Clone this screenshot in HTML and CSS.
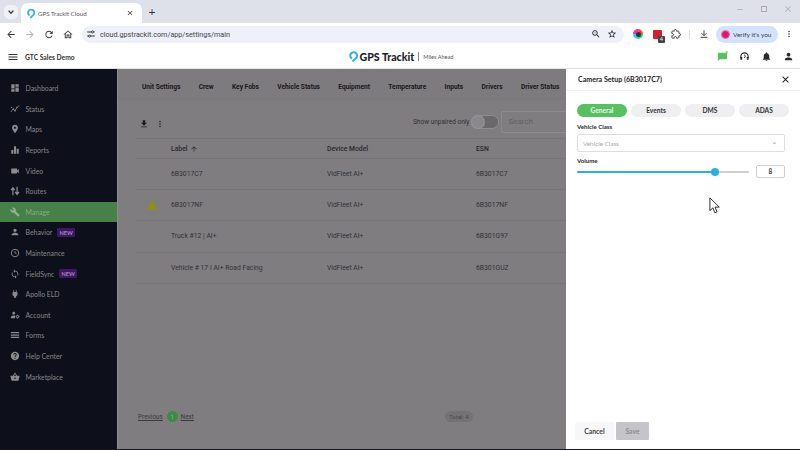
FILE: index.html
```html
<!DOCTYPE html>
<html lang="en">
<head>
<meta charset="utf-8">
<title>GPS Trackit Cloud</title>
<link rel="stylesheet" href="styles.css">
</head>
<body>
<svg class="defs" width="0" height="0" aria-hidden="true">
  <symbol id="i-dash" viewBox="0 0 24 24"><path d="M3 13h8V3H3v10zm0 8h8v-6H3v6zm10 0h8V11h-8v10zm0-18v6h8V3h-8z"/></symbol>
  <symbol id="i-status" viewBox="0 0 24 24"><path d="M2 19l6-7 4 4 5-8" fill="none" stroke="currentColor" stroke-width="2"/><circle cx="8" cy="12" r="2"/><circle cx="12" cy="16" r="2"/><circle cx="17" cy="8" r="2"/><circle cx="21" cy="5" r="1.6"/><circle cx="4" cy="8" r="1.6"/></symbol>
  <symbol id="i-place" viewBox="0 0 24 24"><path d="M12 2C8.130 2 5 5.130 5 9c0 5.250 7 13 7 13s7-7.750 7-13c0-3.870-3.130-7-7-7zm0 9.500c-1.380 0-2.500-1.120-2.500-2.500s1.120-2.500 2.500-2.500 2.500 1.120 2.500 2.500-1.120 2.500-2.500 2.500z"/></symbol>
  <symbol id="i-bars" viewBox="0 0 24 24"><path d="M3 12h5v9H3zM9.500 3h5v18h-5zM16 9h5v12h-5z"/></symbol>
  <symbol id="i-video" viewBox="0 0 24 24"><path d="M17 10.500V7c0-.55-.45-1-1-1H4c-.55 0-1 .45-1 1v10c0 .55.45 1 1 1h12c.55 0 1-.45 1-1v-3.500l4 4v-11l-4 4z"/></symbol>
  <symbol id="i-routes" viewBox="0 0 24 24"><path d="M7 22V6M2.500 10L7 4l4.500 6M17 2v16M12.500 14l4.500 6 4.500-6" fill="none" stroke="currentColor" stroke-width="3"/></symbol>
  <symbol id="i-wrench" viewBox="0 0 24 24"><path d="M22.700 19l-9.100-9.100c.9-2.300.4-5-1.500-6.900-2-2-5-2.400-7.400-1.300L9 6 6 9 1.600 4.700C.4 7.100.9 10.100 2.900 12.100c1.900 1.900 4.600 2.400 6.900 1.500l9.100 9.100c.4.4 1 .4 1.400 0l2.300-2.300c.5-.4.5-1.100.1-1.400z"/></symbol>
  <symbol id="i-person" viewBox="0 0 24 24"><path d="M12 12c2.210 0 4-1.790 4-4s-1.790-4-4-4-4 1.790-4 4 1.790 4 4 4zm0 2c-2.670 0-8 1.340-8 4v2h16v-2c0-2.660-5.330-4-8-4z"/></symbol>
  <symbol id="i-maint" viewBox="0 0 24 24"><circle cx="12" cy="12" r="9" fill="none" stroke="currentColor" stroke-width="2.200"/><path d="M12 7v5l4 2" fill="none" stroke="currentColor" stroke-width="2"/></symbol>
  <symbol id="i-sync" viewBox="0 0 24 24"><path d="M12 4V1L8 5l4 4V6c3.310 0 6 2.690 6 6 0 1.010-.25 1.970-.7 2.800l1.460 1.460C19.540 15.030 20 13.570 20 12c0-4.420-3.580-8-8-8zm0 14c-3.310 0-6-2.690-6-6 0-1.010.25-1.970.7-2.800L5.240 7.740C4.460 8.970 4 10.430 4 12c0 4.420 3.580 8 8 8v3l4-4-4-4v3z"/></symbol>
  <symbol id="i-plug" viewBox="0 0 24 24"><path d="M16 7V3h-2v4h-4V3H8v4h-.01C7 6.990 6 7.990 6 8.990v5.490L9.500 18v3h5v-3l3.500-3.510v-5.500c0-1-1-2-2-1.990z"/></symbol>
  <symbol id="i-account" viewBox="0 0 24 24"><path d="M9 11c2 0 3.500-1.600 3.500-3.500S11 4 9 4 5.500 5.600 5.500 7.500 7 11 9 11zm0 2c-2.700 0-7 1.300-7 4v3h10v-7z"/><circle cx="18" cy="16" r="3" fill="none" stroke="currentColor" stroke-width="2.400"/><path d="M18 11.200v1.800M18 19v1.800M13.200 16H15M21 16h1.800" stroke="currentColor" stroke-width="1.600"/></symbol>
  <symbol id="i-menu" viewBox="0 0 24 24"><path d="M3 18h18v-2H3v2zm0-5h18v-2H3v2zm0-7v2h18V6H3z"/></symbol>
  <symbol id="i-forms" viewBox="0 0 24 24"><path d="M2 5h20v3H2zM2 10.500h20v3H2zM2 16h20v3H2z"/></symbol>
  <symbol id="i-help" viewBox="0 0 24 24"><path d="M12 2C6.480 2 2 6.480 2 12s4.480 10 10 10 10-4.480 10-10S17.520 2 12 2zm1 17h-2v-2h2v2zm2.070-7.750l-.9.92C13.450 12.900 13 13.500 13 15h-2v-.5c0-1.100.45-2.100 1.170-2.830l1.240-1.260c.37-.36.59-.86.59-1.410 0-1.100-.9-2-2-2s-2 .9-2 2H8c0-2.210 1.790-4 4-4s4 1.790 4 4c0 .88-.36 1.680-.93 2.250z"/></symbol>
  <symbol id="i-basket" viewBox="0 0 24 24"><path d="M17.210 9l-4.380-6.560c-.19-.28-.51-.42-.83-.42-.32 0-.64.14-.83.43L6.790 9H2c-.55 0-1 .45-1 1 0 .09.01.18.04.27l2.540 9.270c.23.84 1 1.460 1.920 1.460h13c.92 0 1.690-.62 1.930-1.460l2.540-9.270L23 10c0-.55-.45-1-1-1h-4.790zM9 9l3-4.400L15 9H9zm3 8c-1.100 0-2-.9-2-2s.9-2 2-2 2 .9 2 2-.9 2-2 2z"/></symbol>
  <symbol id="i-bell" viewBox="0 0 24 24"><path d="M12 22c1.100 0 2-.9 2-2h-4c0 1.100.89 2 2 2zm6-6v-5c0-3.070-1.640-5.640-4.500-6.320V4c0-.83-.67-1.500-1.500-1.500s-1.500.67-1.500 1.500v.68C7.630 5.360 6 7.920 6 11v5l-2 2v1h16v-1l-2-2z"/></symbol>
  <symbol id="i-download" viewBox="0 0 24 24"><path d="M19 9h-4V3H9v6H5l7 7 7-7zM5 18v2h14v-2H5z"/></symbol>
  <symbol id="i-more" viewBox="0 0 24 24"><path d="M12 8c1.100 0 2-.9 2-2s-.9-2-2-2-2 .9-2 2 .9 2 2 2zm0 2c-1.100 0-2 .9-2 2s.9 2 2 2 2-.9 2-2-.9-2-2-2zm0 6c-1.100 0-2 .9-2 2s.9 2 2 2 2-.9 2-2-.9-2-2-2z"/></symbol>
  <symbol id="i-close" viewBox="0 0 24 24"><path d="M19 6.410L17.590 5 12 10.590 6.410 5 5 6.410 10.590 12 5 17.590 6.410 19 12 13.410 17.590 19 19 17.590 13.410 12z"/></symbol>
  <symbol id="i-drop" viewBox="0 0 24 24"><path d="M8.500 16.500A7.500 7.500 0 1 1 17 16L10 23" fill="none" stroke="currentColor" stroke-width="4.500"/></symbol>
</svg>

<header class="tabstrip">
  <span class="tab-menu"><svg class="ico-8" viewBox="0 0 24 24"><path d="M5 8l7 8 7-8" fill="none" stroke="currentColor" stroke-width="4"/></svg></span>
  <div class="tab">
    <svg class="ico-9 cyan"><use href="#i-drop"/></svg>
    <span class="tab-title">GPS Trackit Cloud</span>
    <svg class="ico-8 tab-x"><use href="#i-close"/></svg>
  </div>
  <span class="tab-plus">+</span>
  <div class="win">
    <span class="win-min"></span>
    <span class="win-max"></span>
    <svg class="ico-10 win-x"><use href="#i-close"/></svg>
  </div>
</header>

<nav class="chrome">
  <svg class="cbtn" viewBox="0 0 24 24"><path d="M20 11H7.830l5.590-5.590L12 4l-8 8 8 8 1.410-1.410L7.830 13H20v-2z"/></svg>
  <svg class="cbtn dim" viewBox="0 0 24 24"><path d="M12 4l-1.410 1.410L16.170 11H4v2h12.170l-5.580 5.590L12 20l8-8z"/></svg>
  <svg class="cbtn" viewBox="0 0 24 24"><path d="M17.650 6.350C16.200 4.900 14.210 4 12 4c-4.420 0-7.990 3.580-7.990 8s3.570 8 7.990 8c3.730 0 6.840-2.550 7.730-6h-2.080c-.82 2.330-3.040 4-5.650 4-3.310 0-6-2.690-6-6s2.690-6 6-6c1.660 0 3.140.69 4.220 1.780L13 11h7V4l-2.350 2.350z"/></svg>
  <svg class="cbtn" viewBox="0 0 24 24"><path d="M12 5.690l5 4.500V18h-2v-6H9v6H7v-7.810l5-4.500M12 3L2 12h3v8h6v-6h2v6h6v-8h3L12 3z"/></svg>
  <div class="omni">
    <svg class="ico-10" viewBox="0 0 24 24"><path d="M3 7h10M18 7h3M3 17h3M11 17h10" fill="none" stroke="#333" stroke-width="2.500"/><circle cx="15.500" cy="7" r="2.500" fill="none" stroke="#333" stroke-width="2.200"/><circle cx="8.500" cy="17" r="2.500" fill="none" stroke="#333" stroke-width="2.200"/></svg>
    <span class="url">cloud.gpstrackit.com/app/settings/main</span>
    <svg class="ico-10 omni-zoom" viewBox="0 0 24 24"><path d="M15.500 14h-.79l-.28-.27C15.410 12.590 16 11.110 16 9.500 16 5.910 13.090 3 9.500 3S3 5.910 3 9.500 5.910 16 9.500 16c1.610 0 3.090-.59 4.230-1.570l.27.28v.79l5 4.990L20.490 19l-4.990-5zm-6 0C7.010 14 5 11.990 5 9.500S7.010 5 9.500 5 14 7.010 14 9.500 11.990 14 9.500 14z"/><path d="M7 9h5v1H7z"/></svg>
    <svg class="ico-10" viewBox="0 0 24 24"><path d="M22 9.240l-7.190-.62L12 2 9.190 8.630 2 9.240l5.460 4.730L5.820 21 12 17.270 18.180 21l-1.630-7.030L22 9.240zM12 15.400l-3.760 2.270 1-4.280-3.320-2.880 4.380-.38L12 6.100l1.710 4.040 4.380.38-3.320 2.880 1 4.280L12 15.400z"/></svg>
  </div>
  <span class="ext-ring"><span class="ext-ring-in"></span></span>
  <span class="ext-red"><span class="ext-badge">4</span></span>
  <svg class="ico-10 ext-puzzle" viewBox="0 0 24 24"><path d="M20.500 11H19V7c0-1.100-.9-2-2-2h-4V3.500C13 2.120 11.880 1 10.500 1S8 2.120 8 3.500V5H4c-1.100 0-1.990.9-1.990 2v3.800H3.500c1.490 0 2.700 1.210 2.700 2.700s-1.210 2.700-2.700 2.700H2V20c0 1.100.9 2 2 2h3.800v-1.500c0-1.490 1.210-2.700 2.700-2.700 1.490 0 2.700 1.210 2.700 2.700V22H17c1.100 0 2-.9 2-2v-4h1.500c1.380 0 2.500-1.120 2.500-2.500S21.880 11 20.500 11z" fill="none" stroke="#333" stroke-width="2.200"/></svg>
  <span class="sep"></span>
  <svg class="ico-10 dl" viewBox="0 0 24 24"><path d="M12 3v12M6 10l6 6 6-6M4 20h16" fill="none" stroke="#333" stroke-width="2.200"/></svg>
  <div class="verify"><span class="avatar"></span><span>Verify it's you</span></div>
  <svg class="ico-10 kebab"><use href="#i-more"/></svg>
</nav>

<div class="apphead">
  <div class="apphead-left">
    <svg class="ico-12"><use href="#i-menu"/></svg>
    <span class="org">GTC Sales Demo</span>
  </div>
  <div class="logo">
    <svg class="logo-mark"><use href="#i-drop"/></svg>
    <span class="logo-name">GPS Trackit</span>
    <span class="logo-tag">Miles Ahead</span>
  </div>
  <div class="apphead-right">
    <svg class="ico-11 green" viewBox="0 0 24 24"><path d="M20 4H4c-1.100 0-2 .9-2 2v16l4-4h14c1.100 0 2-.9 2-2V6c0-1.100-.9-2-2-2z"/><path d="M18 1h5v5z"/></svg>
    <svg class="ico-11" viewBox="0 0 24 24"><path d="M4 15v-3a8 8 0 0 1 16 0v3" fill="none" stroke="#2a2a2a" stroke-width="2.400"/><path d="M3 13h4v6H3zM17 13h4v6h-4z"/><path d="M12 8l2 5-3 2" fill="none" stroke="#2a2a2a" stroke-width="2"/></svg>
    <svg class="ico-11"><use href="#i-bell"/></svg>
    <svg class="ico-11"><use href="#i-person"/></svg>
  </div>
</div>

<div class="app">
  <aside class="side">
    <a class="item"><svg class="s-ico"><use href="#i-dash"/></svg>Dashboard</a>
    <a class="item"><svg class="s-ico"><use href="#i-status"/></svg>Status</a>
    <a class="item"><svg class="s-ico"><use href="#i-place"/></svg>Maps</a>
    <a class="item"><svg class="s-ico"><use href="#i-bars"/></svg>Reports</a>
    <a class="item"><svg class="s-ico"><use href="#i-video"/></svg>Video</a>
    <a class="item"><svg class="s-ico"><use href="#i-routes"/></svg>Routes</a>
    <a class="item active"><svg class="s-ico"><use href="#i-wrench"/></svg>Manage</a>
    <a class="item"><svg class="s-ico"><use href="#i-person"/></svg>Behavior<span class="new">NEW</span></a>
    <a class="item"><svg class="s-ico"><use href="#i-maint"/></svg>Maintenance</a>
    <a class="item"><svg class="s-ico"><use href="#i-sync"/></svg>FieldSync<span class="new">NEW</span></a>
    <a class="item"><svg class="s-ico"><use href="#i-plug"/></svg>Apollo ELD</a>
    <a class="item"><svg class="s-ico"><use href="#i-account"/></svg>Account</a>
    <a class="item"><svg class="s-ico"><use href="#i-forms"/></svg>Forms</a>
    <a class="item"><svg class="s-ico"><use href="#i-help"/></svg>Help Center</a>
    <a class="item"><svg class="s-ico"><use href="#i-basket"/></svg>Marketplace</a>
  </aside>

  <main class="main">
    <div class="tabs">
      <span>Unit Settings</span><span>Crew</span><span>Key Fobs</span><span>Vehicle Status</span><span>Equipment</span><span>Temperature</span><span>Inputs</span><span>Drivers</span><span>Driver Status</span>
    </div>
    <div class="content">
      <div class="tools">
        <svg class="ico-10 tools-ico"><use href="#i-download"/></svg>
        <svg class="ico-10 tools-ico tools-more"><use href="#i-more"/></svg>
        <span class="unpaired">Show unpaired only</span>
        <span class="toggle"><span class="knob"></span></span>
        <span class="search">Search</span>
      </div>
      <div class="row head">
        <span></span>
        <span class="sort">Label <svg class="ico-8" viewBox="0 0 24 24"><path d="M4 12l1.410 1.410L11 7.830V20h2V7.830l5.580 5.590L20 12l-8-8-8 8z"/></svg></span>
        <span>Device Model</span><span>ESN</span>
      </div>
      <div class="row"><span></span><span>6B3017C7</span><span>VidFleet AI+</span><span>6B3017C7</span></div>
      <div class="row"><span class="warn"><svg class="ico-12 olive" viewBox="0 0 24 24"><path d="M1 21h22L12 2 1 21z"/></svg></span><span>6B3017NF</span><span>VidFleet AI+</span><span>6B3017NF</span></div>
      <div class="row"><span></span><span>Truck #12 | AI+</span><span>VidFleet AI+</span><span>6B301G97</span></div>
      <div class="row"><span></span><span>Vehicle # 17 I AI+ Road Facing</span><span>VidFleet AI+</span><span>6B301GUZ</span></div>
    </div>
    <div class="pager">
      <a>Previous</a><span class="page">1</span><a>Next</a>
      <span class="total">Total: 4</span>
    </div>
  </main>

  <section class="panel">
    <div class="p-head">
      <span class="p-title">Camera Setup (6B3017C7)</span>
      <svg class="ico-11"><use href="#i-close"/></svg>
    </div>
    <div class="p-body">
      <div class="pills">
        <span class="pill on">General</span><span class="pill">Events</span><span class="pill">DMS</span><span class="pill">ADAS</span>
      </div>
      <label class="field-label">Vehicle Class</label>
      <div class="select">Vehicle Class<svg class="caret" viewBox="0 0 10 6"><path d="M1 1h8L5 5z"/></svg></div>
      <label class="field-label vol">Volume</label>
      <div class="volume">
        <div class="track"><div class="fill"></div><div class="thumb"></div></div>
        <div class="num">8</div>
      </div>
      <div class="pointer">
        <svg class="cursor" viewBox="0 0 14 20"><path d="M1 1v15l3.500-3.200 2.300 5.700 2.600-1.100-2.400-5.500H12z" fill="#fff" stroke="#222" stroke-width="1.100"/></svg>
      </div>
    </div>
    <div class="p-foot">
      <span class="btn-cancel">Cancel</span>
      <span class="btn-save">Save</span>
    </div>
  </section>
</div>
<div class="strip"></div>
</body>
</html>
```

FILE: styles.css
```css
* { box-sizing: border-box; }
html, body { margin: 0; padding: 0; width: 800px; height: 450px; overflow: hidden; }
body { font-family: "Lato", "Noto Sans", sans-serif; color: #222; background: #fff; display: flex; flex-direction: column; }
.defs { position: absolute; }
svg { flex: none; display: block; fill: currentColor; }
.ico-8 { width: 8px; height: 8px; }
.ico-9 { width: 10px; height: 11px; }
.ico-10 { width: 10px; height: 10px; }
.ico-11 { width: 11px; height: 11px; }
.ico-12 { width: 12px; height: 12px; }

.tabstrip { height: 23px; background: #dfe1ea; display: flex; align-items: flex-end; flex: none; padding-left: 4px; position: relative; }
.tab-menu { width: 14px; height: 14px; margin: 0 3px 4px 0; background: #f0f1f6; border-radius: 5px; display: flex; align-items: center; justify-content: center; color: #333; }
.tab { width: 121px; height: 20px; background: #fff; border-radius: 7px 7px 0 0; display: flex; align-items: center; padding: 0 8px 0 5px; font-size: 6.200px; color: #555; }
.tab-title { margin-left: 2px; white-space: nowrap; }
.tab-x { margin-left: auto; color: #333; }
.cyan { color: #36b4e0; }
.tab-plus { margin: 0 0 4px 3px; width: 14px; font-size: 12px; line-height: 14px; color: #333; text-align: center; }
.win { margin-left: auto; display: flex; align-items: center; gap: 16px; padding: 0 7px 8px 0; height: 20px; color: #999; }
.win-min { width: 6px; height: 1px; background: #bbb; margin-right: 2px; }
.win-max { width: 6px; height: 6px; border: 1px solid #aaa; }
.win-x { color: #b0b0b0; }

.chrome { height: 22px; background: #fff; flex: none; display: flex; align-items: center; padding-left: 4px; }
.cbtn { width: 14px; height: 11px; margin-right: 5px; fill: #3c3c3c; }
.cbtn.dim { fill: #b6b6b6; }
.omni { width: 542px; height: 17px; margin-left: 2px; background: #eef0fa; border-radius: 9px; display: flex; align-items: center; padding: 0 7px 0 4px; gap: 4px; }
.url { font-family: "Roboto", sans-serif; font-size: 7.200px; color: #444; white-space: nowrap; }
.omni-zoom { margin-left: auto; margin-right: 2px; }
.ext-ring { width: 10px; height: 10px; margin-left: 9px; border-radius: 50%; background: conic-gradient(#e53 0 25%, #3c6 0 50%, #3cf 0 75%, #e3a 0); display: flex; align-items: center; justify-content: center; }
.ext-ring-in { width: 5px; height: 5px; border-radius: 50%; background: #333; }
.ext-red { width: 9px; height: 9px; margin-left: 10px; background: #d4202d; border-radius: 1px; position: relative; }
.ext-badge { position: absolute; right: -3px; bottom: -4px; width: 7px; height: 7px; border-radius: 1px; background: #444; color: #fff; font-size: 5px; line-height: 7px; text-align: center; }
.ext-puzzle { margin-left: 9px; }
.sep { width: 1px; height: 9px; background: #ddd; margin-left: 8px; }
.dl { margin-left: 9px; }
.verify { width: 62px; height: 17px; margin-left: 7px; border-radius: 9px; background: #d3e3fd; display: flex; align-items: center; gap: 3px; padding-left: 5px; font-size: 6.500px; color: #444; white-space: nowrap; }
.avatar { width: 9px; height: 9px; border-radius: 50%; background: #d81b72; border: 1px solid #e7a; flex: none; }
.kebab { margin-left: 6px; color: #333; }

.apphead { height: 24px; flex: none; background: #fff; border-bottom: 1px solid #e2e2e2; display: flex; align-items: center; justify-content: space-between; padding: 0 6px 0 7px; }
.apphead-left { width: 200px; display: flex; align-items: center; gap: 6px; color: #333; }
.org { font-size: 6.700px; font-weight: 700; color: #333; white-space: nowrap; }
.logo { display: flex; align-items: center; }
.logo-mark { width: 11px; height: 13px; color: #36b4e0; margin-right: 1px; }
.logo-name { font-size: 10.600px; font-weight: 900; color: #1d1d2b; white-space: nowrap; }
.logo-tag { font-size: 5.600px; color: #555; margin-left: 4px; padding-left: 4px; border-left: 1px solid #888; line-height: 9px; white-space: nowrap; }
.apphead-right { width: 200px; display: flex; justify-content: flex-end; gap: 11px; color: #2a2a2a; }
.green { color: #5cc05d; }

.app { flex: 1; display: flex; min-height: 0; }
.side { width: 117px; flex: none; background: #0d0f1b; padding-top: 9px; display: flex; flex-direction: column; }
.item { height: 20.600px; flex: none; display: flex; align-items: center; padding-left: 10px; font-size: 6.900px; color: #868688; white-space: nowrap; }
.item.active { background: #48804a; color: #8aa889; }
.s-ico { width: 10px; height: 10px; margin-right: 5.500px; color: #8b8b8d; }
.active .s-ico { color: #94b093; }
.new { margin-left: 5px; padding: 0 2px; height: 9px; line-height: 9px; font-size: 5.600px; font-weight: 700; color: #9c8aa8; background: #3d1766; border-radius: 1px; }

.main { width: 449px; flex: none; background: #7f7d80; overflow: hidden; display: flex; flex-direction: column; border-left: 1px solid #8a908a; }
.tabs { height: 31px; flex: none; display: flex; align-items: center; gap: 18.300px; padding: 5px 0 0 24px; font-family: "Roboto", sans-serif; font-size: 6.600px; font-weight: 700; color: #19181a; background: #7d7b7e; white-space: nowrap; border-bottom: 1px solid #7b797c; }
.content { width: 460px; flex: none; margin-left: 17px; }
.tools { height: 38px; display: flex; align-items: center; padding: 5px 0 0 4px; color: #1f1e20; }
.tools-ico { margin-top: 5px; }
.tools-more { margin-left: 6px; }
.unpaired { margin-left: 248px; font-family: "Roboto", sans-serif; font-size: 6.500px; color: #333; white-space: nowrap; }
.toggle { width: 28px; height: 14px; margin-left: 2px; border-radius: 7px; background: #6a686b; border: 1px solid #908e91; display: flex; align-items: center; flex: none; }
.knob { width: 12px; height: 12px; background: #8a888b; border-radius: 50%; box-shadow: 0 0 0 1px #949295; }
.search { width: 80px; height: 22px; margin-left: 2px; border: 1px solid #8d8b8e; border-radius: 2px; padding-left: 6px; line-height: 20px; font-family: "Roboto", sans-serif; font-size: 8px; color: #636164; flex: none; }
.row { display: grid; grid-template-columns: 36px 156px 149px 1fr; align-items: center; height: 31.200px; border-bottom: 1px solid #767477; font-family: "Roboto", sans-serif; font-size: 6.800px; color: #333235; white-space: nowrap; }
.row.head { height: 21px; border-top: 1px solid #767477; font-weight: 500; color: #2b2a2c; }
.sort { display: flex; align-items: center; gap: 2px; }
.warn { display: flex; justify-content: center; padding-right: 3px; }
.olive { color: #928d14; }

.pager { margin-top: auto; padding: 0 0 27px 20px; display: flex; align-items: center; font-family: "Roboto", sans-serif; font-size: 6.400px; color: #3a393b; }
.pager a { text-decoration: underline; }
.page { width: 11px; height: 11px; margin: 0 3px 0 4px; border-radius: 50%; background: #3f8a43; color: #8cb58d; text-align: center; line-height: 11px; font-size: 6px; }
.total { margin-left: 251px; width: 28px; height: 11px; border-radius: 6px; background: #747275; line-height: 11px; text-align: center; font-size: 6px; color: #4b4a4c; white-space: nowrap; }

.panel { flex: 1; min-width: 0; background: #fff; display: flex; flex-direction: column; }
.p-head { height: 22px; flex: none; display: flex; align-items: center; justify-content: space-between; padding: 0 9px 0 12px; border-bottom: 1px solid #f1f1f1; color: #1b1b1b; }
.p-title { font-size: 7.100px; font-weight: 700; color: #1d1d1d; white-space: nowrap; }
.p-body { padding: 13px 15px 0 11px; flex: 1; min-height: 0; }
.pills { display: flex; gap: 4px; width: 212px; }
.pill { width: 50px; height: 13px; border-radius: 7px; background: #efeef1; font-size: 6.600px; font-weight: 700; color: #333; text-align: center; line-height: 13px; }
.pill.on { background: #58c063; color: #e9f7e9; }
.field-label { display: block; margin-top: 5px; height: 9px; line-height: 9px; font-size: 6.100px; font-weight: 700; color: #2a2a2a; }
.select { margin-top: 3px; height: 18px; border: 1px solid #dedede; border-radius: 2px; padding: 0 7px 0 5px; display: flex; align-items: center; justify-content: space-between; font-size: 6.300px; color: #a8a8a8; }
.caret { width: 5px; height: 3px; fill: #bbb; }
.field-label.vol { margin-top: 4px; }
.volume { display: flex; align-items: center; gap: 7px; height: 13px; }
.track { width: 172px; height: 2px; background: #cfcfd4; position: relative; border-radius: 1px; }
.fill { width: 138px; height: 2px; background: #2bb0e0; border-radius: 1px; }
.thumb { position: absolute; left: 134px; top: -3px; width: 8px; height: 8px; border-radius: 50%; background: #2bb0e0; }
.num { width: 29px; height: 13px; border: 1px solid #cfcfcf; border-radius: 2px; text-align: center; line-height: 11px; font-size: 6.500px; font-weight: 700; color: #333; }
.pointer { margin: 19px 0 0 132px; }
.cursor { width: 12px; height: 17px; }
.p-foot { flex: none; display: flex; gap: 2px; padding: 0 0 9px 9px; }
.btn-cancel { width: 39px; height: 18px; background: #f7f6f8; border-radius: 2px; text-align: center; line-height: 18px; font-size: 6.800px; font-weight: 700; color: #444; }
.btn-save { width: 33px; height: 18px; background: #c5c4c9; border-radius: 1px; text-align: center; line-height: 18px; font-size: 6.800px; font-weight: 700; color: #8e8d91; }
.strip { height: 1px; flex: none; background: #15151a; }
```
